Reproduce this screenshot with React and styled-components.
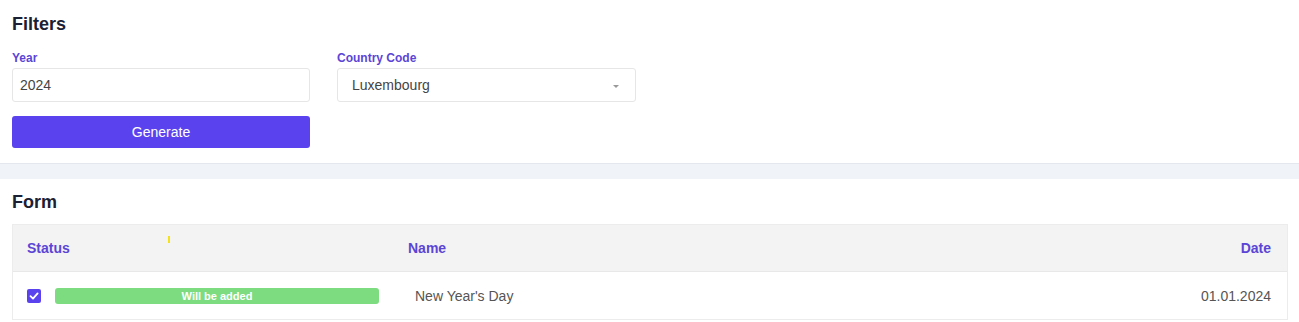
import React from "react";
import styled, { createGlobalStyle } from "styled-components";

const GlobalStyle = createGlobalStyle`
  html, body {
    margin: 0;
    padding: 0;
    background: #ffffff;
    font-family: "Liberation Sans", Arial, sans-serif;
  }
`;

const Section = styled.section`
  padding: 12px 13px 15px 12px;
  background: #fff;
`;

const Title = styled.h2`
  margin: 0;
  font-size: 18px;
  line-height: 24px;
  font-weight: 700;
  color: #1b2034;
`;

const FilterGrid = styled.div`
  display: grid;
  grid-template-columns: 298px 299px;
  column-gap: 27px;
  margin-top: 15px;
`;

const Field = styled.div`
  display: flex;
  flex-direction: column;
`;

const Label = styled.label`
  font-size: 12px;
  line-height: 14px;
  font-weight: 700;
  color: #5b45d6;
  margin-bottom: 3px;
`;

const Input = styled.input`
  box-sizing: border-box;
  height: 34px;
  border: 1px solid #e6e6e6;
  border-radius: 3px;
  padding: 0 7px;
  font-family: inherit;
  font-size: 14px;
  color: #444;
  outline: none;
`;

const Select = styled.div`
  box-sizing: border-box;
  height: 34px;
  border: 1px solid #e6e6e6;
  border-radius: 3px;
  padding: 0 14px;
  display: flex;
  align-items: center;
  justify-content: space-between;
  font-size: 14px;
  color: #444;
`;

const Caret = styled.span`
  width: 0;
  height: 0;
  border-left: 3px solid transparent;
  border-right: 3px solid transparent;
  border-top: 3px solid #999;
  margin-right: 2px;
  margin-top: 2px;
`;

const Button = styled.button`
  box-sizing: border-box;
  grid-column: 1;
  margin-top: 14px;
  height: 32px;
  border: none;
  border-radius: 3px;
  background: #5a43ef;
  color: #fff;
  font-family: inherit;
  font-size: 14px;
  cursor: pointer;
`;

const Band = styled.div`
  height: 15px;
  background: #f0f3f7;
  border-top: 1px solid #e4e8ee;
`;

const FormSection = styled(Section)`
  padding-top: 11px;
`;

const Table = styled.div`
  margin-top: 10px;
  border: 1px solid #ececec;
  width: 1274px;
`;

const Row = styled.div`
  position: relative;
  display: grid;
  grid-template-columns: 380px 1fr 200px;
  align-items: center;
  height: ${(p) => (p.$head ? "46px" : "47px")};
  background: ${(p) => (p.$head ? "#f3f3f3" : "#fff")};
  border-bottom: ${(p) => (p.$head ? "1px solid #e8e8e8" : "none")};
`;

const HeadCell = styled.div`
  padding: 0 ${(p) => (p.$right ? "16px" : "15px")} 0 ${(p) => (p.$first ? "14px" : "15px")};
  font-size: 14px;
  font-weight: 700;
  color: #5b45d6;
  text-align: ${(p) => (p.$right ? "right" : "left")};
`;

const Marker = styled.span`
  position: absolute;
  left: 155px;
  top: 11px;
  width: 2px;
  height: 7px;
  background: #f3e21b;
`;

const Cell = styled.div`
  padding: 0 ${(p) => (p.$right ? "16px" : "22px")};
  font-size: 14px;
  color: #555;
  text-align: ${(p) => (p.$right ? "right" : "left")};
`;

const StatusCell = styled.div`
  display: flex;
  align-items: center;
  gap: 14px;
  padding: 0 14px;
`;

const Check = styled.span`
  width: 14px;
  height: 14px;
  border-radius: 2px;
  background: #5a43ef;
  display: flex;
  align-items: center;
  justify-content: center;
  flex: none;
`;

const Badge = styled.span`
  flex: 1;
  height: 16px;
  border-radius: 3px;
  background: #7ddc7f;
  color: #fff;
  font-size: 11px;
  font-weight: 700;
  display: flex;
  align-items: center;
  justify-content: center;
`;

export default function App() {
  return (
    <>
      <GlobalStyle />
      <Section>
        <Title>Filters</Title>
        <FilterGrid>
          <Field>
            <Label>Year</Label>
            <Input defaultValue="2024" />
          </Field>
          <Field>
            <Label>Country Code</Label>
            <Select>
              Luxembourg
              <Caret />
            </Select>
          </Field>
          <Button>Generate</Button>
        </FilterGrid>
      </Section>
      <Band />
      <FormSection>
        <Title>Form</Title>
        <Table>
          <Row $head>
            <HeadCell $first>Status</HeadCell>
            <HeadCell>Name</HeadCell>
            <HeadCell $right>Date</HeadCell>
            <Marker />
          </Row>
          <Row>
            <StatusCell>
              <Check>
                <svg width="10" height="10" viewBox="0 0 10 10">
                  <path d="M1.5 5.2 L4 7.6 L8.6 2.4" fill="none" stroke="#fff" strokeWidth="1.8" strokeLinecap="round" strokeLinejoin="round" />
                </svg>
              </Check>
              <Badge>Will be added</Badge>
            </StatusCell>
            <Cell>New Year's Day</Cell>
            <Cell $right>01.01.2024</Cell>
          </Row>
        </Table>
      </FormSection>
    </>
  );
}
